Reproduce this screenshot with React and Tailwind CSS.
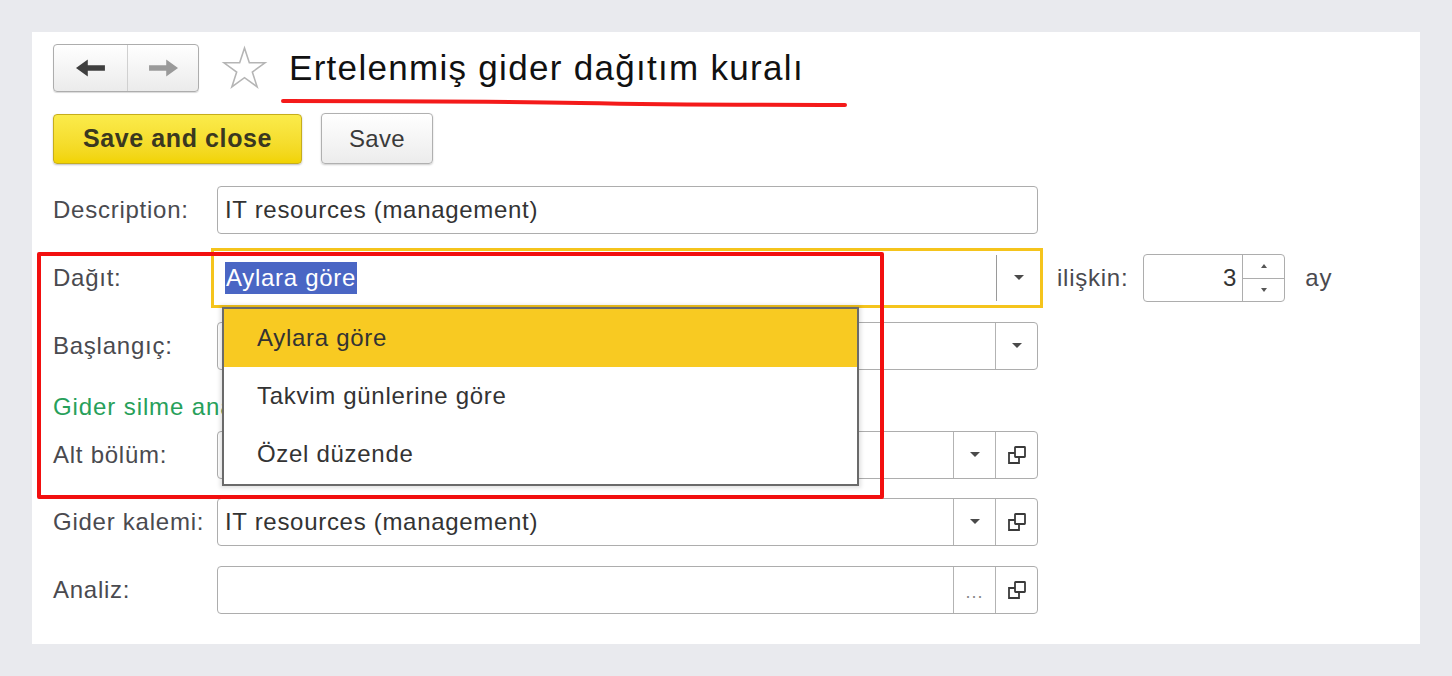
import React from "react";

const font = { fontFamily: '"Liberation Sans", Arial, sans-serif' };

function DropArrow() {
  return (
    <svg width="10" height="6" viewBox="0 0 10 6">
      <polygon points="0,0 10,0 5,5" fill="#4a4a4a" />
    </svg>
  );
}

function OpenIcon() {
  return (
    <svg width="20" height="20" viewBox="0 0 20 20" fill="none" stroke="#3a3a3a" strokeWidth="1.8">
      <rect x="8" y="2" width="10" height="10" rx="0.5" />
      <path d="M8 8 H2 V18 H12 V12" />
    </svg>
  );
}

function SideButton({ children }) {
  return (
    <div className="w-[42px] h-full flex items-center justify-center border-l border-[#b3b3b3]">
      {children}
    </div>
  );
}

function Field({ value, buttons = [], width = "w-[821px]" }) {
  return (
    <div
      className={`${width} h-[48px] flex items-stretch border border-[#adadad] rounded-[4px] bg-white`}
    >
      <div className="flex-1 flex items-center pl-[7px] text-[24px] tracking-[0.7px] text-[#333]">
        {value}
      </div>
      {buttons.map((b, i) => (
        <SideButton key={i}>
          {b === "drop" && <DropArrow />}
          {b === "open" && <OpenIcon />}
          {b === "dots" && (
            <span className="text-[#888] text-[18px] tracking-[1px] mt-[4px]">...</span>
          )}
        </SideButton>
      ))}
    </div>
  );
}

function Label({ children }) {
  return (
    <div className="w-[164px] shrink-0 text-[24px] tracking-[0.75px] text-[#4a4a4f]">
      {children}
    </div>
  );
}

function Star() {
  return (
    <svg width="47" height="47" viewBox="0 0 48 48" fill="none" stroke="#b5b5b5" strokeWidth="1.6">
      <polygon points="24,3 28.94,18.2 44.92,18.2 31.99,27.6 36.93,42.8 24,33.4 11.07,42.8 16.01,27.6 3.08,18.2 19.06,18.2" />
    </svg>
  );
}

export default function App() {
  return (
    <div className="w-[1452px] h-[676px] bg-[#e9eaee] pt-[32px] pl-[32px]" style={font}>
      <div className="relative w-[1388px] h-[612px] bg-white pl-[21px] pt-[12px]">
        {/* header */}
        <div className="flex items-center h-[48px]">
          <div className="w-[146px] h-[48px] flex border border-[#adadad] rounded-[4px] bg-gradient-to-b from-white to-[#ebebeb] shadow-[0_1px_1px_rgba(0,0,0,0.15)]">
            <div className="w-[74px] flex items-center justify-center border-r border-[#d0d0d0]">
              <svg width="30" height="18" viewBox="0 0 28 16">
                <path d="M0 8 L11 0 V5.5 H27 V10.5 H11 V16 Z" fill="#3f3f3f" />
              </svg>
            </div>
            <div className="flex-1 flex items-center justify-center">
              <svg width="30" height="18" viewBox="0 0 28 16">
                <path d="M28 8 L17 0 V5.5 H1 V10.5 H17 V16 Z" fill="#9a9a9a" />
              </svg>
            </div>
          </div>
          <div className="ml-[22px]">
            <Star />
          </div>
          <div className="ml-[21px] text-[35px] tracking-[1.3px] text-[#111] leading-none pb-[2px]">
            Ertelenmiş gider dağıtım kuralı
          </div>
        </div>

        {/* buttons */}
        <div className="flex items-center mt-[21px]">
          <div className="w-[249px] h-[50px] flex items-center justify-center rounded-[4px] border border-[#c6ad1c] bg-gradient-to-b from-[#fbeb4a] to-[#f1d300] shadow-[0_1px_2px_rgba(0,0,0,0.25)] text-[25px] font-bold tracking-[0.6px] text-[#3a3820]">
            Save and close
          </div>
          <div className="ml-[19px] w-[112px] h-[51px] flex items-center justify-center rounded-[4px] border border-[#b0b0b0] bg-gradient-to-b from-white to-[#ececec] shadow-[0_1px_2px_rgba(0,0,0,0.2)] text-[24px] tracking-[0.3px] text-[#3a3a3a]">
            Save
          </div>
        </div>

        {/* form */}
        <div className="mt-[22px] flex flex-col">
          <div className="flex items-center h-[48px]">
            <Label>Description:</Label>
            <Field value="IT resources (management)" />
          </div>

          <div className="flex items-center h-[48px] mt-[20px]">
            <Label>Dağıt:</Label>
            <div className="ml-[-6px] w-[832px] h-[60px] border-[3px] border-[#f5c41c] flex items-stretch py-[4px]">
              <div className="flex-1 flex items-center pl-[11px]">
                <span className="bg-[#4a66c4] text-white text-[24px] tracking-[0.7px] leading-[32px] px-[1px]">
                  Aylara göre
                </span>
              </div>
              <div className="w-[44px] flex items-center justify-center border-l border-[#9a9a9a]">
                <DropArrow />
              </div>
            </div>
            <div className="ml-[14px] text-[24px] tracking-[0.75px] text-[#4a4a4f]">ilişkin:</div>
            <div className="ml-[15px] w-[142px] h-[48px] flex border border-[#adadad] rounded-[4px]">
              <div className="flex-1 flex items-center justify-end pr-[6px] text-[24px] text-[#333]">3</div>
              <div className="w-[42px] flex flex-col border-l border-[#adadad]">
                <div className="flex-1 flex items-center justify-center border-b border-[#adadad]">
                  <svg width="6" height="4" viewBox="0 0 6 4">
                    <polygon points="0,4 6,4 3,0" fill="#555" />
                  </svg>
                </div>
                <div className="flex-1 flex items-center justify-center">
                  <svg width="6" height="4" viewBox="0 0 6 4">
                    <polygon points="0,0 6,0 3,4" fill="#555" />
                  </svg>
                </div>
              </div>
            </div>
            <div className="ml-[20px] text-[24px] tracking-[0.75px] text-[#4a4a4f]">ay</div>
          </div>

          <div className="flex items-center h-[48px] mt-[20px]">
            <Label>Başlangıç:</Label>
            <Field value="" buttons={["drop"]} />
          </div>

          <div className="h-[61px] flex items-center pt-[12px] text-[24px] tracking-[0.9px] text-[#27a05a]">
            Gider silme analitiği
          </div>

          <div className="flex items-center h-[48px]">
            <Label>Alt bölüm:</Label>
            <Field value="" buttons={["drop", "open"]} />
          </div>

          <div className="flex items-center h-[48px] mt-[19px]">
            <Label>Gider kalemi:</Label>
            <Field value="IT resources (management)" buttons={["drop", "open"]} />
          </div>

          <div className="flex items-center h-[48px] mt-[20px]">
            <Label>Analiz:</Label>
            <Field value="" buttons={["dots", "open"]} />
          </div>
        </div>

        {/* dropdown list */}
        <div className="absolute left-[190px] top-[275px] w-[637px] h-[179px] bg-white border-2 border-[#6a6a6a] shadow-[0_0_4px_2px_rgba(0,0,0,0.12)] text-[24px] tracking-[0.7px] text-[#333]">
          <div className="h-[58px] flex items-center pl-[33px] bg-[#f8ca22]">Aylara göre</div>
          <div className="h-[58px] flex items-center pl-[33px]">Takvim günlerine göre</div>
          <div className="h-[58px] flex items-center pl-[33px]">Özel düzende</div>
        </div>

        {/* annotations */}
        <svg className="absolute left-[248px] top-[65px]" width="568" height="12" viewBox="0 0 568 12">
          <path d="M3 4 Q200 4 300 6 T565 8" stroke="#f41a1a" strokeWidth="4" fill="none" strokeLinecap="round" />
        </svg>
        <div className="absolute left-[5px] top-[220px] w-[847px] h-[247px] border-4 border-[#f20f0f] rounded-[2px]" />
      </div>
    </div>
  );
}
